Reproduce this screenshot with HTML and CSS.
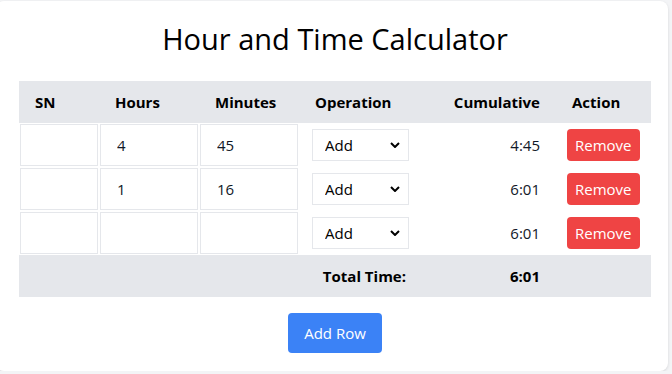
FILE: index.html
```html
<!DOCTYPE html>
<html lang="en">
<head>
  <meta charset="UTF-8">
  <meta name="viewport" content="width=device-width, initial-scale=1">
  <title>Hour and Time Calculator</title>
  <link rel="stylesheet" href="styles.css">
</head>
<body>
  <div class="card">
    <h1>Hour and Time Calculator</h1>
    <table class="time-table">
      <colgroup>
        <col class="col-sn">
        <col class="col-hours">
        <col class="col-minutes">
        <col class="col-op">
        <col class="col-cum">
        <col class="col-action">
      </colgroup>
      <thead>
        <tr>
          <th>SN</th>
          <th>Hours</th>
          <th>Minutes</th>
          <th>Operation</th>
          <th class="num">Cumulative</th>
          <th>Action</th>
        </tr>
      </thead>
      <tbody>
        <tr>
          <td class="field"><input type="text" value=""></td>
          <td class="field"><input type="text" value="4"></td>
          <td class="field"><input type="text" value="45"></td>
          <td class="op"><select><option>Add</option><option>Subtract</option></select></td>
          <td class="num">4:45</td>
          <td class="action"><button class="btn-remove">Remove</button></td>
        </tr>
        <tr>
          <td class="field"><input type="text" value=""></td>
          <td class="field"><input type="text" value="1"></td>
          <td class="field"><input type="text" value="16"></td>
          <td class="op"><select><option>Add</option><option>Subtract</option></select></td>
          <td class="num">6:01</td>
          <td class="action"><button class="btn-remove">Remove</button></td>
        </tr>
        <tr>
          <td class="field"><input type="text" value=""></td>
          <td class="field"><input type="text" value=""></td>
          <td class="field"><input type="text" value=""></td>
          <td class="op"><select><option>Add</option><option>Subtract</option></select></td>
          <td class="num">6:01</td>
          <td class="action"><button class="btn-remove">Remove</button></td>
        </tr>
      </tbody>
      <tfoot>
        <tr>
          <td colspan="4" class="num">Total Time:</td>
          <td class="num">6:01</td>
          <td></td>
        </tr>
      </tfoot>
    </table>
    <button class="btn-add">Add Row</button>
  </div>
</body>
</html>
```

FILE: styles.css
```css
* {
  box-sizing: border-box;
}
body {
  margin: 0;
  background: #f3f4f6;
  font-family: "Open Sans", "Noto Sans", sans-serif;
  font-size: 15px;
  color: #111827;
}
.card {
  width: 672px;
  margin: 1px 0 0 -4px;
  padding: 20px 17px 18px 23px;
  background: #fff;
  border-radius: 8px;
  box-shadow: 0 1px 3px rgba(0, 0, 0, 0.12);
}
h1 {
  margin: 0 0 24px;
  font-size: 29px;
  line-height: 36px;
  font-weight: 500;
  text-align: center;
  color: #000;
}
.time-table {
  width: 632px;
  border-collapse: collapse;
  table-layout: fixed;
}
.col-sn { width: 80px; }
.col-hours { width: 100px; }
.col-minutes { width: 100px; }
.col-op { width: 123px; }
.col-cum { width: 134px; }
.col-action { width: 95px; }

.time-table th {
  height: 42px;
  padding: 0 16px;
  background: #e5e7eb;
  text-align: left;
  font-weight: 700;
  line-height: 24px;
  color: #000;
}
.time-table td {
  padding: 0;
  line-height: 24px;
}
.time-table .num {
  text-align: right;
  padding-right: 16px;
}
.time-table td.field {
  padding: 1px;
}
.field input {
  display: block;
  width: 100%;
  height: 42px;
  padding: 0 16px;
  border: 1px solid #e5e7eb;
  font: inherit;
  color: #111827;
  outline: none;
}
.time-table td.op {
  padding-left: 13px;
}
.op select {
  display: block;
  width: 97px;
  height: 32px;
  padding: 0 0 0 12px;
  border: 1px solid #e5e7eb;
  border-radius: 0;
  background: #fff url("data:image/svg+xml,%3Csvg xmlns='http://www.w3.org/2000/svg' width='10' height='6' viewBox='0 0 10 6'%3E%3Cpath d='M1 1l4 4 4-4' fill='none' stroke='%23000' stroke-width='2'/%3E%3C/svg%3E") no-repeat right 8px center;
  font: inherit;
  color: #000;
  appearance: none;
  -webkit-appearance: none;
}
.time-table td.action {
  padding-left: 11px;
}
.btn-remove {
  padding: 4px 8px;
  border: none;
  border-radius: 4px;
  background: #ef4444;
  color: #fff;
  font: inherit;
  line-height: 24px;
}
.time-table tfoot td {
  height: 42px;
  background: #e5e7eb;
  font-weight: 700;
  color: #000;
}
.btn-add {
  display: block;
  margin: 16px auto 0;
  padding: 8px 16px;
  border: none;
  border-radius: 4px;
  background: #3b82f6;
  color: #fff;
  font: inherit;
  line-height: 24px;
}
```
